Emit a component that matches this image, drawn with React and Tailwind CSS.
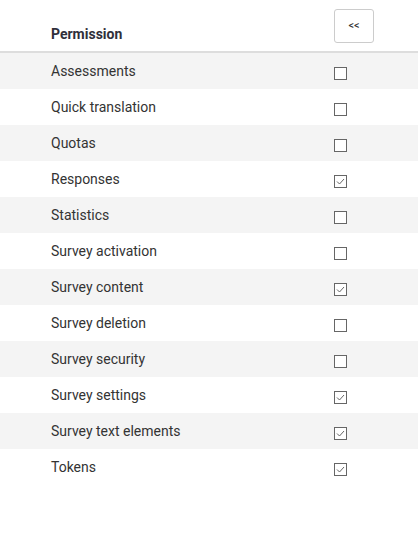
import React from 'react';

const permissions = [
  { name: 'Assessments', checked: false },
  { name: 'Quick translation', checked: false },
  { name: 'Quotas', checked: false },
  { name: 'Responses', checked: true },
  { name: 'Statistics', checked: false },
  { name: 'Survey activation', checked: false },
  { name: 'Survey content', checked: true },
  { name: 'Survey deletion', checked: false },
  { name: 'Survey security', checked: false },
  { name: 'Survey settings', checked: true },
  { name: 'Survey text elements', checked: true },
  { name: 'Tokens', checked: true },
];

const Box = ({ checked }) => (
  <span className="mt-[5px] flex h-[13px] w-[13px] items-center justify-center border-[1.5px] border-[#666] bg-white">
    {checked && (
      <svg width="9" height="9" viewBox="0 0 9 9" fill="none">
        <path d="M1 4.5 L3.5 7 L8 2" stroke="#666" strokeWidth="1" />
      </svg>
    )}
  </span>
);

export default function App() {
  return (
    <div className="h-[535px] w-[418px] bg-white text-[14px] text-[#333]" style={{ fontFamily: 'Roboto, "Liberation Sans", sans-serif' }}>
      <div className="flex h-[53px] border-b-2 border-[#ddd]">
        <div className="flex w-[334px] items-end pb-[6px] pl-[51px] font-bold text-[#2f2f3a]">Permission</div>
        <div className="pt-[9px]">
          <button className="h-[34px] w-[40px] rounded-[3px] border border-[#ccc] bg-white text-[11px] text-[#333]">
            &lt;&lt;
          </button>
        </div>
      </div>
      {permissions.map((p, i) => (
        <div key={p.name} className={`flex h-[36px] items-center ${i % 2 === 0 ? 'bg-[#f4f4f4]' : 'bg-white'}`}>
          <div className="w-[334px] pl-[51px] leading-none">{p.name}</div>
          <Box checked={p.checked} />
        </div>
      ))}
    </div>
  );
}
